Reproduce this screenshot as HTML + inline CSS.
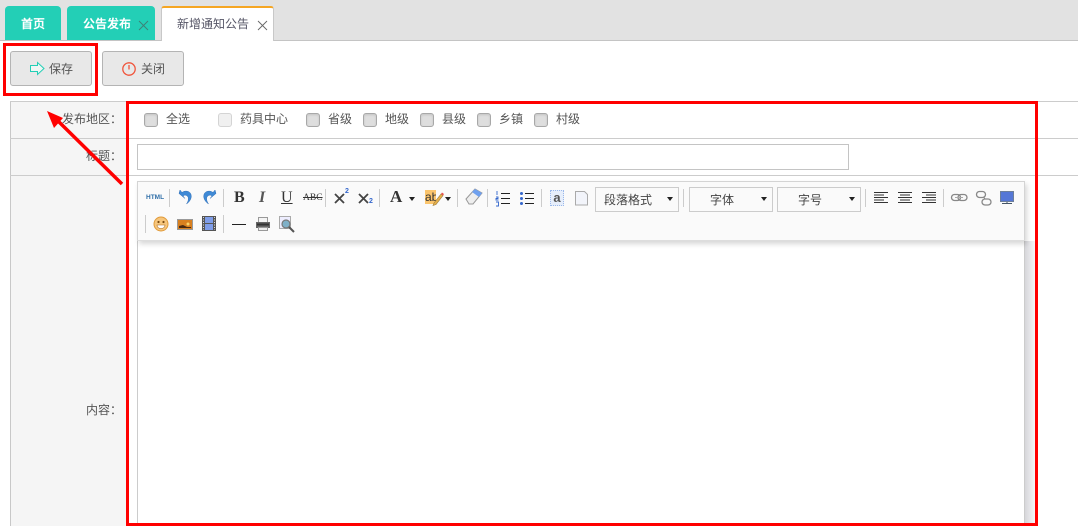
<!DOCTYPE html>
<html><head><meta charset="utf-8"><style>
html,body{margin:0;padding:0;width:1078px;height:526px;overflow:hidden;background:#fff}
body{position:relative;font-family:"Liberation Sans","Noto Sans CJK SC",sans-serif;font-size:12px;color:#555}
.a{position:absolute;box-sizing:border-box}
.t{position:absolute;white-space:nowrap;line-height:16px}
.tab{position:absolute;top:6px;height:34px;background:#23cfb6;border-radius:4px 4px 0 0;color:#fff;font-weight:bold}
.btn{position:absolute;top:51px;width:82px;height:35px;background:#e8e8e8;border:1px solid #b4b4b4;border-radius:3px;box-sizing:border-box}
.cb{position:absolute;top:113px;width:14px;height:14px;box-sizing:border-box;background:#dedede;border:1px solid #a8a8a8;border-radius:3px;box-shadow:inset 0 1px 2px rgba(0,0,0,.12)}
.sep{position:absolute;width:1px;background:#ccc}
.sel{position:absolute;top:187px;height:25px;box-sizing:border-box;border:1px solid #ccc;background:#fafafa;color:#444;line-height:24px;text-align:center}
.ar{position:absolute;width:0;height:0;border:3px solid transparent;border-top:4px solid #222;border-bottom:0}
svg{position:absolute;left:0;top:0}
</style></head><body>
<div class="a" style="left:0;top:0;width:1078px;height:41px;background:#e2e2e2;border-bottom:1px solid #c4c4c4"></div>
<div class="tab" style="left:5px;width:56px"><span class="t" style="left:16px;top:10px">首页</span></div>
<div class="tab" style="left:67px;width:88px"><span class="t" style="left:16px;top:10px">公告发布</span></div>
<div class="a" style="left:161px;top:6px;width:113px;height:35px;background:#fff;border:1px solid #c8c8c8;border-top:2px solid #f5a623;border-bottom:0;border-radius:3px 3px 0 0"></div>
<span class="t" style="left:177px;top:16px;color:#556;">新增通知公告</span>

<div class="btn" style="left:10px"></div>
<div class="btn" style="left:102px"></div>
<span class="t" style="left:49px;top:61px">保存</span>
<span class="t" style="left:141px;top:61px">关闭</span>

<!-- form -->
<div class="a" style="left:10px;top:101px;width:117px;height:425px;background:#f5f5f5;border-left:1px solid #c8c8c8"></div>
<div class="a" style="left:10px;top:101px;width:1068px;height:1px;background:#ccc"></div>
<div class="a" style="left:10px;top:138px;width:1068px;height:1px;background:#ccc"></div>
<div class="a" style="left:10px;top:175px;width:1068px;height:1px;background:#ccc"></div>
<span class="t" style="left:62px;top:111px">发布地区：</span>
<span class="t" style="left:86px;top:148px">标题：</span>
<span class="t" style="left:86px;top:402px">内容：</span>

<div class="cb" style="left:144px"></div><span class="t" style="left:166px;top:111px">全选</span>
<div class="cb" style="left:218px;background:#f0f0f0;border-color:#d4d4d4;box-shadow:none"></div><span class="t" style="left:240px;top:111px">药具中心</span>
<div class="cb" style="left:306px"></div><span class="t" style="left:328px;top:111px">省级</span>
<div class="cb" style="left:363px"></div><span class="t" style="left:385px;top:111px">地级</span>
<div class="cb" style="left:420px"></div><span class="t" style="left:442px;top:111px">县级</span>
<div class="cb" style="left:477px"></div><span class="t" style="left:499px;top:111px">乡镇</span>
<div class="cb" style="left:534px"></div><span class="t" style="left:556px;top:111px">村级</span>

<div class="a" style="left:137px;top:144px;width:712px;height:26px;border:1px solid #c4c4c4;background:#fff"></div>

<!-- editor -->
<div class="a" style="left:1025px;top:241px;width:10px;height:285px;background:linear-gradient(90deg,#d6d6da,#f6f6f8)"></div>
<div class="a" style="left:137px;top:240px;width:888px;height:286px;background:#fff;border-left:1px solid #ccc;border-right:1px solid #ccc"></div>
<div class="a" style="left:137px;top:181px;width:888px;height:60px;background:#fafafa;border:1px solid #d4d4d4;border-bottom:1px solid #ddd;box-shadow:2px 3px 5px rgba(0,0,0,.16)"></div>

<div class="sep" style="left:169px;top:189px;height:18px"></div>
<div class="sep" style="left:223px;top:189px;height:18px"></div>
<div class="sep" style="left:325px;top:189px;height:18px"></div>
<div class="sep" style="left:379px;top:189px;height:18px"></div>
<div class="sep" style="left:457px;top:189px;height:18px"></div>
<div class="sep" style="left:487px;top:189px;height:18px"></div>
<div class="sep" style="left:541px;top:189px;height:18px"></div>
<div class="sep" style="left:683px;top:189px;height:18px"></div>
<div class="sep" style="left:865px;top:189px;height:18px"></div>
<div class="sep" style="left:943px;top:189px;height:18px"></div>
<div class="sep" style="left:145px;top:215px;height:18px"></div>
<div class="sep" style="left:223px;top:215px;height:18px"></div>

<div class="sel" style="left:595px;width:84px;text-align:left;padding-left:8px">段落格式</div>
<div class="sel" style="left:689px;width:84px;padding-right:18px">字体</div>
<div class="sel" style="left:777px;width:84px;padding-right:18px">字号</div>
<div class="ar" style="left:667px;top:197px"></div>
<div class="ar" style="left:761px;top:197px"></div>
<div class="ar" style="left:849px;top:197px"></div>
<div class="ar" style="left:409px;top:197px"></div>
<div class="ar" style="left:445px;top:197px"></div>

<span class="t" style="left:146px;top:190px;font:bold 6.500px/16px 'Liberation Sans',sans-serif;color:#2f6ea8;letter-spacing:0">HTML</span>
<span class="t" style="left:234px;top:190px;font:bold 16px/16px 'Liberation Serif',serif;color:#333">B</span>
<span class="t" style="left:259px;top:190px;font:italic bold 16px/16px 'Liberation Serif',serif;color:#555">I</span>
<span class="t" style="left:281px;top:190px;font:16px/16px 'Liberation Serif',serif;color:#333;text-decoration:underline">U</span>
<span class="t" style="left:303px;top:190px;font:9.500px/16px 'Liberation Serif',serif;color:#333;text-decoration:line-through">ABC</span>
<span class="t" style="left:345px;top:187px;font:bold 7px/10px 'Liberation Sans',sans-serif;color:#36c">2</span>
<span class="t" style="left:369px;top:197px;font:bold 7px/10px 'Liberation Sans',sans-serif;color:#36c">2</span>
<span class="t" style="left:390px;top:189px;font:bold 17px/16px 'Liberation Serif',serif;color:#333">A</span>
<span class="t" style="left:425px;top:190px;font:12px/15px 'Liberation Sans',sans-serif;color:#333;background:#fbc56d;height:14px;width:11px;overflow:hidden">ab</span>
<span class="t" style="left:550px;top:190px;font:bold 13px/16px 'Liberation Sans',sans-serif;color:#555;background:#e6eefb;outline:1px dotted #9ab8ea;outline-offset:-1px;width:14px;text-align:center">a</span>

<svg width="1078" height="526" viewBox="0 0 1078 526" fill="none">
<!-- tab close -->
<path d="M139 21l9 9M148 21l-9 9" stroke="#3f7f76" stroke-width=".9"/>
<path d="M258 21l9 9M267 21l-9 9" stroke="#666" stroke-width=".9"/>
<!-- save -->
<path d="M30.500 65.500h7v-3l6.500 6-6.500 6v-3h-7z" stroke="#23cfb6" stroke-width="1" fill="#f0f6f4"/>
<!-- power -->
<circle cx="129" cy="69" r="6.200" stroke="#f0553c" stroke-width="1.300"/>
<path d="M129 65v4.500" stroke="#f0553c" stroke-width="1.300"/>
<!-- X glyphs -->
<path d="M335 194l9 9M344 194l-9 9M359 194l9 9M368 194l-9 9" stroke="#444" stroke-width="1.800"/>
<!-- undo/redo -->
<path d="M179 193.500l1-3.500 2 2.500c3-2.500 8-1.500 9 2 1 3.500-1 7-4.500 9.500 1.500-2.500 2.500-5 1.500-7-1-2-3.500-2.500-5-1l2 2.500z" fill="#3f8ad6" stroke="#2f6db5" stroke-width=".5"/>
<path d="M216 193.500l-1-3.500-2 2.500c-3-2.500-8-1.500-9 2-1 3.500 1 7 4.500 9.500-1.500-2.500-2.500-5-1.500-7 1-2 3.500-2.500 5-1l-2 2.500z" fill="#3f8ad6" stroke="#2f6db5" stroke-width=".5"/>
<!-- pencil -->
<path d="M434 203l7-9 2 1.500-7 9-3 1z" fill="#e6b04a" stroke="#9a7a3c" stroke-width=".6"/><path d="M441 194l1-1.500 2 1.500-1 1.500z" fill="#e85050"/>
<!-- eraser -->
<path d="M466 199l9-10 7 4-9 11h-4z" fill="#eee" stroke="#999"/><path d="M472 192l3-3 7 4-3 4z" fill="#6fa0ee"/>
<!-- ol -->
<path d="M501 193.500h9M501 198.500h9M501 203.500h9" stroke="#222"/>
<path d="M497 191v4M496 197h2v1.500h-2v1.500h2.500M496 202h2.500v4h-2.500" stroke="#36c" stroke-width=".9"/>
<!-- ul -->
<path d="M525 193.500h9M525 198.500h9M525 203.500h9" stroke="#222"/>
<circle cx="521.500" cy="193.500" r="1.500" fill="#36c"/><circle cx="521.500" cy="198.500" r="1.500" fill="#36c"/><circle cx="521.500" cy="203.500" r="1.500" fill="#36c"/>
<!-- doc -->
<path d="M575.500 191.500h9l3 3v10.500h-12z" fill="#f2f4fa" stroke="#aaa"/>
<!-- align -->
<path d="M874 192.500h14M874 195h10M874 197.500h14M874 200h10M874 202.500h14" stroke="#333"/>
<path d="M898 192.500h14M900 195h10M898 197.500h14M900 200h10M898 202.500h14" stroke="#333"/>
<path d="M922 192.500h14M926 195h10M922 197.500h14M926 200h10M922 202.500h14" stroke="#333"/>
<!-- link -->
<rect x="951.500" y="194.500" width="9" height="6" rx="3" stroke="#888" stroke-width="1.300"/><rect x="958" y="194.500" width="9" height="6" rx="3" stroke="#888" stroke-width="1.300"/>
<path d="M955 197.500h8" stroke="#aaa"/>
<!-- unlink -->
<rect x="976.500" y="191.500" width="9" height="6" rx="3" stroke="#888" stroke-width="1.300"/><rect x="982" y="199" width="9" height="6" rx="3" stroke="#888" stroke-width="1.300"/>
<path d="M984 197.500l1 1.500" stroke="#888"/>
<!-- monitor -->
<rect x="1000.500" y="191.500" width="13" height="10" fill="#5577d6" stroke="#6d7f9a"/><path d="M1007 202v1.500M1002 203.500h10" stroke="#456"/>
<!-- smiley -->
<circle cx="161" cy="224" r="7" fill="#f7c67c" stroke="#e09a3a"/>
<circle cx="158.500" cy="222" r="1.100" fill="#7a4a10"/><circle cx="163.500" cy="222" r="1.100" fill="#7a4a10"/>
<path d="M157 225h8c0 2.500-2 3.500-4 3.500s-4-1-4-3.500z" fill="#fff" stroke="#a8661c" stroke-width=".6"/>
<!-- image -->
<rect x="177.500" y="219.500" width="15" height="10" fill="#d9801f" stroke="#999"/><path d="M179 226l4-1 4 2h4v1h-12z" fill="#4a2a10"/><circle cx="188" cy="224" r="1.500" fill="#fbd36b"/>
<!-- film -->
<rect x="202" y="216" width="14" height="15" fill="#555"/><rect x="205" y="217" width="8" height="6" fill="#7f9de8"/><rect x="205" y="224" width="8" height="6" fill="#7f9de8"/>
<path d="M203.500 217v13M214.500 217v13" stroke="#ddd" stroke-dasharray="1 1.500"/>
<!-- hr -->
<path d="M232 224.500h14" stroke="#222"/>
<!-- print -->
<rect x="258.500" y="217.500" width="9" height="5" fill="#f4f4f4" stroke="#999"/><rect x="256" y="222" width="14" height="6" fill="#666"/><path d="M257 224.500h12" stroke="#333" stroke-width="2"/><rect x="258.500" y="227.500" width="9" height="3" fill="#eee" stroke="#999"/>
<!-- preview -->
<rect x="279.500" y="216.500" width="11" height="12" fill="#eef" stroke="#aaa"/><circle cx="286" cy="224" r="4" fill="#7fb0c8" stroke="#777" stroke-width="1.200"/><path d="M289 227l5 5" stroke="#555" stroke-width="2"/>

<!-- red annotations -->
<rect x="4.500" y="44.500" width="92" height="50" stroke="#f00" stroke-width="3"/>
<rect x="127.500" y="102.500" width="909" height="422" stroke="#f00" stroke-width="3"/>
<path d="M122 184L56 119" stroke="#f00" stroke-width="3.500"/>
<path d="M47 111L63 118L54 128z" fill="#f00"/>
</svg>
</body></html>
